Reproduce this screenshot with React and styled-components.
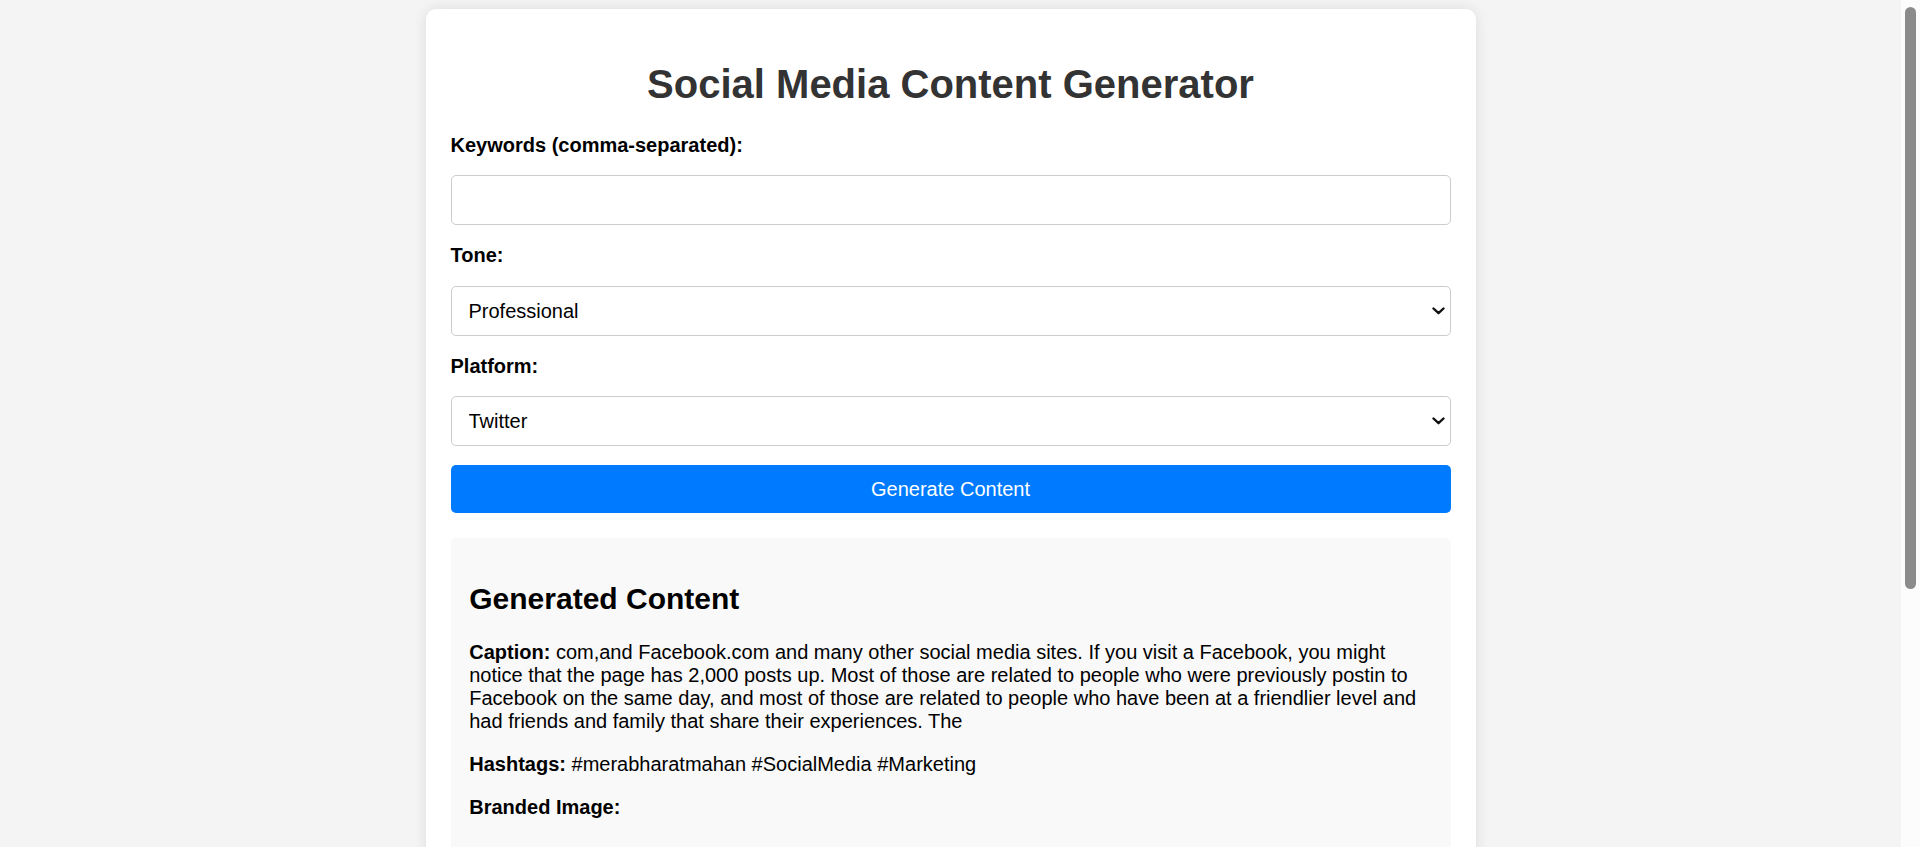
import React from "react";
import styled, { createGlobalStyle } from "styled-components";

const GlobalStyle = createGlobalStyle`
  html, body {
    margin: 0;
    padding: 0;
    height: 100%;
    overflow: hidden;
  }
  body {
    background: #f4f4f4;
    font-family: "Liberation Sans", Arial, sans-serif;
    color: #000;
  }
`;

const Shell = styled.div`
  display: flex;
  height: 100vh;
`;

const Viewport = styled.div`
  flex: 1;
  min-width: 0;
  overflow: hidden;
`;

const ScrollTrack = styled.div`
  width: 19px;
  flex: none;
  background: #fcfcfc;
  padding: 7px 4px;
  box-sizing: border-box;
  display: flex;
  flex-direction: column;
`;

const ScrollThumb = styled.div`
  height: ${(p) => p.$length}px;
  background: #8b8b8b;
  border-radius: 6px;
`;

const Page = styled.div`
  padding: 9px 0 10px;
`;

const Card = styled.main`
  max-width: 1000px;
  margin: 0 auto;
  padding: 25px;
  background: #fff;
  border-radius: 10px;
  box-shadow: 0 0 12.5px rgba(0, 0, 0, 0.1);
`;

const Title = styled.h1`
  margin: 26.8px 0;
  font-size: 40px;
  font-weight: bold;
  line-height: 46px;
  color: #333;
  text-align: center;
`;

const Group = styled.div`
  margin-bottom: 19px;
`;

const Label = styled.label`
  display: block;
  margin-bottom: 18.6px;
  font-size: 20px;
  line-height: 23px;
  font-weight: bold;
  color: #000;
`;

const fieldBase = `
  display: block;
  box-sizing: border-box;
  width: 100%;
  height: 50px;
  margin: 0;
  padding: 12.5px;
  font-family: "Liberation Sans", Arial, sans-serif;
  font-size: 20px;
  color: #000;
  background: #fff;
  border: 1px solid #ccc;
  border-radius: 5px;
  outline: none;
`;

const TextInput = styled.input`
  ${fieldBase}
`;

const SelectWrap = styled.div`
  position: relative;
`;

const Select = styled.select`
  ${fieldBase}
  appearance: none;
  -webkit-appearance: none;
  padding-left: 17px;
`;

const Chevron = styled.svg`
  position: absolute;
  right: 6px;
  top: 50%;
  width: 13px;
  height: 8px;
  transform: translateY(-50%);
  pointer-events: none;
`;

const Button = styled.button`
  display: block;
  box-sizing: border-box;
  width: 100%;
  height: 48px;
  margin-top: 1px;
  padding: 0 12.5px;
  font-family: "Liberation Sans", Arial, sans-serif;
  font-size: 20px;
  color: #fff;
  background: #007bff;
  border: none;
  border-radius: 5px;
  cursor: pointer;
`;

const Result = styled.section`
  margin-top: 25px;
  padding: 18.75px;
  background: #f9f9f9;
  border-radius: 5px;
`;

const ResultTitle = styled.h2`
  margin: 24.9px 0;
  font-size: 30px;
  line-height: 34.5px;
  font-weight: bold;
  color: #000;
`;

const Para = styled.p`
  margin: 20px 0;
  font-size: 20px;
  line-height: 23px;
  color: #000;
`;

const ImageFrame = styled.div`
  height: 318px;
`;

function SelectField({ value, options }) {
  return (
    <SelectWrap>
      <Select defaultValue={value}>
        {options.map((o) => (
          <option key={o}>{o}</option>
        ))}
      </Select>
      <Chevron viewBox="0 0 13 8">
        <path
          d="M1.5 1.5 L6.5 6.2 L11.5 1.5"
          fill="none"
          stroke="#111"
          strokeWidth="2.4"
          strokeLinecap="round"
          strokeLinejoin="round"
        />
      </Chevron>
    </SelectWrap>
  );
}

export default function App() {
  return (
    <>
      <GlobalStyle />
      <Shell>
        <Viewport>
          <Page>
            <Card>
              <Title>Social Media Content Generator</Title>
              <Group>
                <Label>Keywords (comma-separated):</Label>
                <TextInput type="text" />
              </Group>
              <Group>
                <Label>Tone:</Label>
                <SelectField
                  value="Professional"
                  options={["Professional", "Casual", "Friendly", "Humorous"]}
                />
              </Group>
              <Group>
                <Label>Platform:</Label>
                <SelectField
                  value="Twitter"
                  options={["Twitter", "Facebook", "Instagram", "LinkedIn"]}
                />
              </Group>
              <Button>Generate Content</Button>
              <Result>
                <ResultTitle>Generated Content</ResultTitle>
                <Para>
                  <strong>Caption:</strong> com,and Facebook.com and many other
                  social media sites. If you visit a Facebook, you might notice
                  that the page has 2,000 posts up. Most of those are related to
                  people who were previously postin to Facebook on the same day,
                  and most of those are related to people who have been at a
                  friendlier level and had friends and family that share their
                  experiences. The
                </Para>
                <Para>
                  <strong>Hashtags:</strong> #merabharatmahan #SocialMedia
                  #Marketing
                </Para>
                <Para>
                  <strong>Branded Image:</strong>
                </Para>
                <ImageFrame />
              </Result>
            </Card>
          </Page>
        </Viewport>
        <ScrollTrack>
          <ScrollThumb $length={582} />
        </ScrollTrack>
      </Shell>
    </>
  );
}
